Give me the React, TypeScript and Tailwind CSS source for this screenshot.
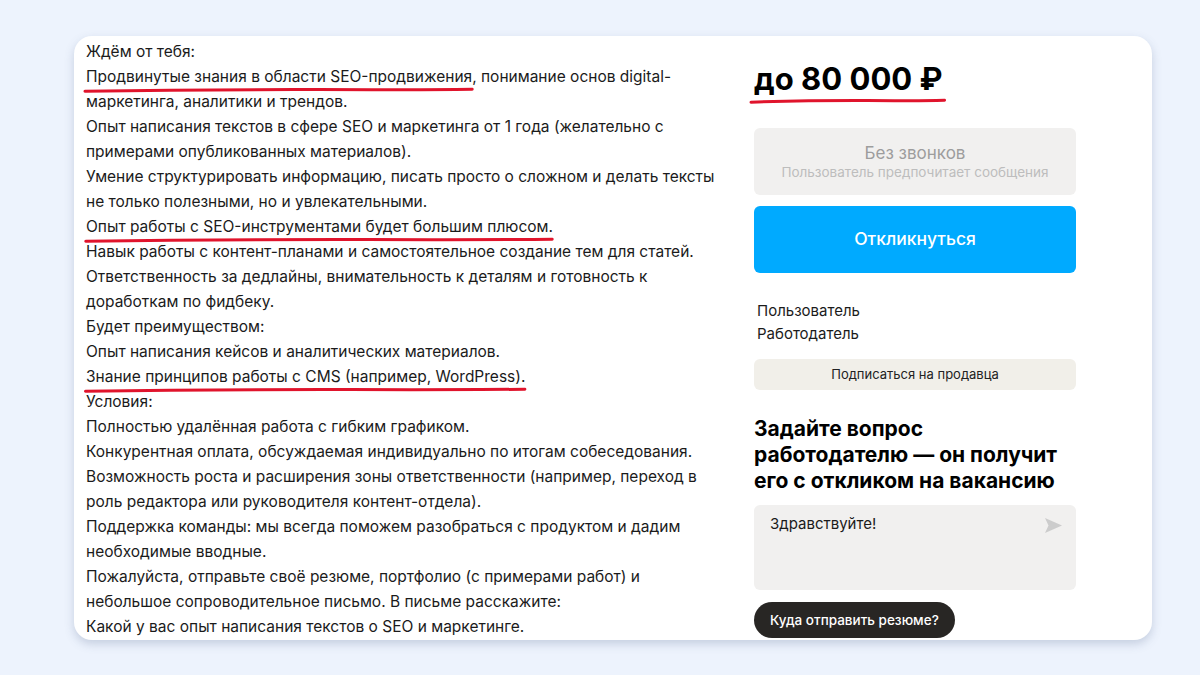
import { FC, ReactNode } from 'react';

const font = { fontFamily: 'Inter, "Noto Sans", sans-serif' };

// hand-drawn red stroke under a phrase
const Marked: FC<{ children: ReactNode; className?: string }> = ({ children, className }) => (
  <span className="relative inline-block">
    {children}
    <svg
      className={`pointer-events-none absolute left-[-5px] right-[-4px] w-[calc(100%+9px)] ${className ?? 'bottom-[-4px] h-[6px]'}`}
      viewBox="0 0 100 6"
      preserveAspectRatio="none"
    >
      <path d="M1 4.2 Q 30 2.4 60 2.6 T 99 2.2" stroke="#e0142c" strokeWidth="3" fill="none" strokeLinecap="round" vectorEffect="non-scaling-stroke" />
    </svg>
  </span>
);

const lines: ReactNode[] = [
  'Ждём от тебя:',
  <>
    <Marked>Продвинутые знания в области SEO-продвижения</Marked>, понимание основ digital-
  </>,
  'маркетинга, аналитики и трендов.',
  'Опыт написания текстов в сфере SEO и маркетинга от 1 года (желательно с',
  'примерами опубликованных материалов).',
  'Умение структурировать информацию, писать просто о сложном и делать тексты',
  'не только полезными, но и увлекательными.',
  <Marked>Опыт работы с SEO-инструментами будет большим плюсом.</Marked>,
  'Навык работы с контент-планами и самостоятельное создание тем для статей.',
  'Ответственность за дедлайны, внимательность к деталям и готовность к',
  'доработкам по фидбеку.',
  'Будет преимуществом:',
  'Опыт написания кейсов и аналитических материалов.',
  <Marked>Знание принципов работы с CMS (например, WordPress).</Marked>,
  'Условия:',
  'Полностью удалённая работа с гибким графиком.',
  'Конкурентная оплата, обсуждаемая индивидуально по итогам собеседования.',
  'Возможность роста и расширения зоны ответственности (например, переход в',
  'роль редактора или руководителя контент-отдела).',
  'Поддержка команды: мы всегда поможем разобраться с продуктом и дадим',
  'необходимые вводные.',
  'Пожалуйста, отправьте своё резюме, портфолио (с примерами работ) и',
  'небольшое сопроводительное письмо. В письме расскажите:',
  'Какой у вас опыт написания текстов о SEO и маркетинге.',
];

export default function App() {
  return (
    <div className="w-[1200px] h-[675px] bg-[#edf3fd] pt-[36px] pl-[74px]" style={font}>
      <div className="flex w-[1078px] h-[604px] overflow-hidden rounded-[18px] bg-white shadow-[0_4px_10px_rgba(80,100,140,0.25)]">
        <div className="w-[642px] shrink-0 pl-[12px] pt-[3px] text-[15.5px] leading-[25px] text-[#1b1b1b]">
          {lines.map((l, i) => (
            <div key={i} className="whitespace-nowrap">
              {l}
            </div>
          ))}
        </div>

        <div className="ml-[38px] w-[322px] shrink-0 pt-[24px] text-[#1b1b1b]">
          <div className="text-[31px] font-bold leading-[38px] text-black">
            <Marked className="bottom-[-6px] h-[6px]">до 80 000 ₽</Marked>
          </div>

          <div className="mt-[30px] flex h-[67px] flex-col items-center justify-center rounded-[6px] bg-[#f1f0ef]">
            <div className="text-[17px] leading-[20px] text-[#9d9d9d]">Без звонков</div>
            <div className="text-[13.5px] leading-[18px] text-[#bdbdbd]">Пользователь предпочитает сообщения</div>
          </div>

          <button className="mt-[11px] flex h-[67px] w-full items-center justify-center rounded-[6px] bg-[#00aaff] text-[17.5px] font-medium text-white">
            Откликнуться
          </button>

          <div className="mt-[26px] pl-[3px] text-[15px] leading-[23px]">
            <div>Пользователь</div>
            <div>Работодатель</div>
          </div>

          <button className="mt-[14px] flex h-[31px] w-full items-center justify-center rounded-[6px] bg-[#f1efe9] text-[13px] text-[#222]">
            Подписаться на продавца
          </button>

          <h3 className="mt-[26px] text-[21px] font-bold leading-[26px] text-black">
            Задайте вопрос
            <br />
            работодателю — он получит
            <br />
            его с откликом на вакансию
          </h3>

          <div className="mt-[11px] flex h-[85px] items-start justify-between rounded-[6px] bg-[#f1f0ef] pl-[16px] pr-[14px] pt-[9px]">
            <span className="text-[15px] leading-[20px] text-[#1b1b1b]">Здравствуйте!</span>
            <svg width="17" height="15" viewBox="0 0 17 15" className="mt-[4px]">
              <path d="M0 0 L17 7.5 L0 15 L3.5 7.5 Z" fill="#cccccc" />
            </svg>
          </div>

          <button className="mt-[12px] flex h-[36px] items-center rounded-full bg-[#282624] px-[16px] text-[13.5px] font-medium text-white">
            Куда отправить резюме?
          </button>
        </div>
      </div>
    </div>
  );
}
